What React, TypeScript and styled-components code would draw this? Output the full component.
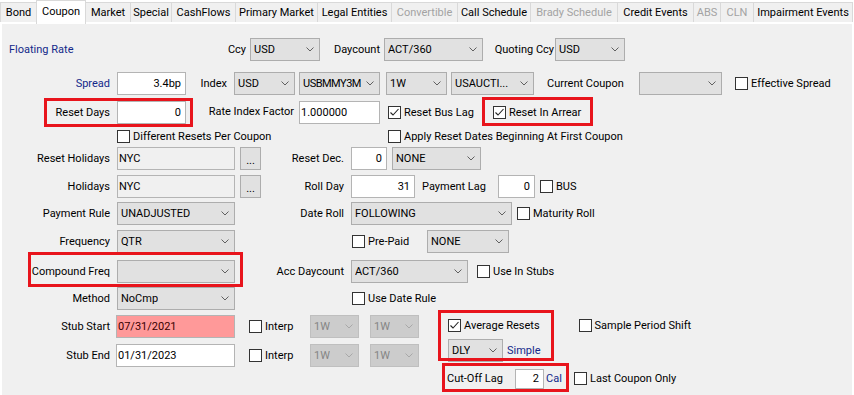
import React from "react";
import styled, { createGlobalStyle } from "styled-components";

const GlobalStyle = createGlobalStyle`
  html, body {
    margin: 0;
    padding: 0;
    background: #fff;
  }
  body {
    font-family: Roboto, "Noto Sans", sans-serif;
    font-size: 11px;
    color: #000;
  }
  #root {
    width: 854px;
    height: 395px;
    overflow: hidden;
  }
`;

const tabs = [
  { label: "Bond", w: 37 },
  { label: "Coupon", w: 50, active: true },
  { label: "Market", w: 46 },
  { label: "Special", w: 42 },
  { label: "CashFlows", w: 65 },
  { label: "Primary Market", w: 83 },
  { label: "Legal Entities", w: 75 },
  { label: "Convertible", w: 67, disabled: true },
  { label: "Call Schedule", w: 74 },
  { label: "Brady Schedule", w: 88, disabled: true },
  { label: "Credit Events", w: 77 },
  { label: "ABS", w: 28, disabled: true },
  { label: "CLN", w: 34, disabled: true },
  { label: "Impairment Events", w: 100 },
];

export default function App() {
  return (
    <>
      <GlobalStyle />
      <Window>
        <TabStrip>
          {tabs.map((t) => (
            <Tab key={t.label} $w={t.w} $active={t.active} $disabled={t.disabled}>
              {t.label}
            </Tab>
          ))}
        </TabStrip>
        <Panel>
          <Row $mt={14}>
            <Label $ml={9} $w={200} $blue>Floating Rate</Label>
            <Label $w={37} $right>Ccy</Label>
            <Combo $ml={4} $w={70} value="USD" />
            <Label $w={60} $right>Daycount</Label>
            <Combo $ml={4} $w={99} value="ACT/360" />
            <Label $w={71} $right>Quoting Ccy</Label>
            <Combo $ml={1} $w={70} value="USD" />
          </Row>

          <Row $mt={11}>
            <Label $w={110} $right $blue>Spread</Label>
            <TextBox $ml={7} $w={69} $right>3.4bp</TextBox>
            <Label $w={41} $right>Index</Label>
            <Combo $ml={7} $w={61} value="USD" />
            <Combo $ml={4} $w={81} value="USBMMY3M" tight />
            <Combo $ml={6} $w={61} value="1W" />
            <Combo $ml={4} $w={83} value="USAUCTI..." />
            <Label $ml={13} $w={92}>Current Coupon</Label>
            <Combo $w={83} value="" />
            <Check $ml={13} label="Effective Spread" />
          </Row>

          <Row $mt={6}>
            <Highlight $l={44} $t={-3} $r={-7} $b={-3}>
              <Label $w={110} $right>Reset Days</Label>
              <TextBox $ml={7} $w={69} $right>0</TextBox>
            </Highlight>
            <Label $w={108} $right $raise>Rate Index Factor</Label>
            <TextBox $ml={5} $w={81}>1.000000</TextBox>
            <Check $ml={8} $w={105} checked label="Reset Bus Lag" />
            <Highlight $l={-11} $t={-4} $r={-10} $b={-2}>
              <Check $w={90} checked label="Reset In Arrear" />
            </Highlight>
          </Row>

          <Row $mt={6} $h={13}>
            <Check $ml={117} $w={271} label="Different Resets Per Coupon" />
            <Check label="Apply Reset Dates Beginning At First Coupon" />
          </Row>

          <Row $mt={4}>
            <Label $w={110} $right>Reset Holidays</Label>
            <TextBox $ml={7} $w={118} $tone="readonly">NYC</TextBox>
            <DotsButton $ml={5}>...</DotsButton>
            <Label $w={83} $right>Reset Dec.</Label>
            <TextBox $ml={7} $w={36} $right>0</TextBox>
            <Combo $ml={5} $w={89} value="NONE" />
          </Row>

          <Row $mt={5}>
            <Label $w={110} $right>Holidays</Label>
            <TextBox $ml={7} $w={118} $tone="readonly">NYC</TextBox>
            <DotsButton $ml={5}>...</DotsButton>
            <Label $w={83} $right>Roll Day</Label>
            <TextBox $ml={7} $w={64} $right>31</TextBox>
            <Label $ml={7} $w={76}>Payment Lag</Label>
            <TextBox $w={37} $right>0</TextBox>
            <Check $ml={5} label="BUS" />
          </Row>

          <Row $mt={4}>
            <Label $w={110} $right>Payment Rule</Label>
            <Combo $ml={7} $w={118} value="UNADJUSTED" />
            <Label $w={109} $right>Date Roll</Label>
            <Combo $ml={7} $w={161} value="FOLLOWING" />
            <Check $ml={5} label="Maturity Roll" />
          </Row>

          <Row $mt={5}>
            <Label $w={110} $right>Frequency</Label>
            <Combo $ml={7} $w={118} value="QTR" />
            <Check $ml={117} $w={75} label="Pre-Paid" />
            <Combo $w={82} value="NONE" />
          </Row>

          <Row $mt={7}>
            <Highlight $l={28} $t={-8} $r={-8} $b={-4}>
              <Label $w={110} $right>Compound Freq</Label>
              <Combo $ml={7} $w={118} value="" />
            </Highlight>
            <Label $w={109} $right>Acc Daycount</Label>
            <Combo $ml={7} $w={117} value="ACT/360" />
            <Check $ml={9} label="Use In Stubs" />
          </Row>

          <Row $mt={4}>
            <Label $w={110} $right>Method</Label>
            <Combo $ml={7} $w={118} value="NoCmp" />
            <Check $ml={117} label="Use Date Rule" />
          </Row>

          <BottomArea>
            <StubColumn>
              <Row $mt={5}>
                <Label $w={110} $right>Stub Start</Label>
                <TextBox $ml={6} $w={119} $tone="error">07/31/2021</TextBox>
                <Check $ml={14} $w={61} label="Interp" />
                <Combo $w={49} value="1W" disabled />
                <Combo $ml={11} $w={49} value="1W" disabled />
              </Row>
              <Row $mt={6}>
                <Label $w={110} $right>Stub End</Label>
                <TextBox $ml={6} $w={119}>01/31/2023</TextBox>
                <Check $ml={14} $w={61} label="Interp" />
                <Combo $w={49} value="1W" disabled />
                <Combo $ml={11} $w={49} value="1W" disabled />
              </Row>
            </StubColumn>

            <AveragingColumn>
              <AveragingTop>
                <Highlight $ml={11} $column $l={-10} $t={-4} $r={-13} $b={1}>
                  <Row $mt={0}>
                    <Check checked label="Average Resets" />
                  </Row>
                  <Row $mt={2}>
                    <Combo $w={55} value="DLY" />
                    <Label $ml={4} $blue>Simple</Label>
                  </Row>
                </Highlight>
                <Row $mt={0}>
                  <Check $ml={38} label="Sample Period Shift" />
                </Row>
              </AveragingTop>
              <Row $mt={5}>
                <Highlight $ml={10} $l={-5} $t={-4} $r={-8} $b={-2}>
                  <Label $w={68}>Cut-Off Lag</Label>
                  <TextBox $w={29} $h={20} $right>2</TextBox>
                  <Label $ml={2} $w={15} $blue>Cal</Label>
                </Highlight>
                <Check $ml={13} label="Last Coupon Only" />
              </Row>
            </AveragingColumn>
          </BottomArea>
        </Panel>
      </Window>
    </>
  );
}

function Combo({
  value,
  $w,
  $ml,
  disabled,
  tight,
}: {
  value: string;
  $w: number;
  $ml?: number;
  disabled?: boolean;
  tight?: boolean;
}) {
  return (
    <ComboBox $w={$w} $ml={$ml} $disabled={disabled}>
      <ComboValue $tight={tight}>{value}</ComboValue>
      <svg width="8" height="5" viewBox="0 0 8 5">
        <polyline
          points="0.5,0.5 4,4 7.5,0.5"
          fill="none"
          stroke={disabled ? "#a8a8a8" : "#606060"}
          strokeWidth="1"
        />
      </svg>
    </ComboBox>
  );
}

function Check({ label, checked, $w, $ml }: { label: string; checked?: boolean; $w?: number; $ml?: number }) {
  return (
    <CheckWrapper $w={$w} $ml={$ml}>
      <CheckBox>
        {checked && (
          <svg width="11" height="11" viewBox="0 0 11 11">
            <polyline points="1.5,5.5 4,8 9.5,2" fill="none" stroke="#222" strokeWidth="1.1" />
          </svg>
        )}
      </CheckBox>
      <span>{label}</span>
    </CheckWrapper>
  );
}

const Window = styled.div`
  width: 854px;
  height: 395px;
  background: #fff;
  display: flex;
  flex-direction: column;
  overflow: hidden;
`;

const TabStrip = styled.div`
  display: flex;
  align-items: flex-start;
  height: 22px;
  flex: none;
`;

const Tab = styled.div<{ $w: number; $active?: boolean; $disabled?: boolean }>`
  box-sizing: border-box;
  flex: none;
  width: ${(p) => p.$w}px;
  height: ${(p) => (p.$active ? 24 : 20)}px;
  margin-top: ${(p) => (p.$active ? 0 : 2)}px;
  margin-left: -1px;
  padding-bottom: ${(p) => (p.$active ? 3 : 0)}px;
  display: flex;
  align-items: center;
  justify-content: center;
  border: 1px solid #d9d9d9;
  border-bottom: none;
  background: ${(p) => (p.$active ? "#fff" : "#f0f0f0")};
  color: ${(p) => (p.$disabled ? "#a3a3a3" : "#000")};
  white-space: nowrap;
  position: relative;
  z-index: ${(p) => (p.$active ? 1 : 0)};

  &:first-child {
    margin-left: 0;
  }
`;

const Panel = styled.div`
  flex: 1;
  margin-top: 2px;
  background: #f0f0f0;
  box-shadow: inset 2px 0 #fff, inset -2px 0 #fff;
  display: flex;
  flex-direction: column;
`;

const Row = styled.div<{ $mt: number; $h?: number }>`
  display: flex;
  align-items: center;
  flex: none;
  height: ${(p) => p.$h ?? 23}px;
  margin-top: ${(p) => p.$mt}px;
`;

const BottomArea = styled.div`
  display: flex;
  flex: none;
`;

const StubColumn = styled.div`
  display: flex;
  flex-direction: column;
  width: 437px;
  flex: none;
`;

const AveragingColumn = styled.div`
  display: flex;
  flex-direction: column;
`;

const AveragingTop = styled.div`
  display: flex;
  align-items: flex-start;
  margin-top: 4px;
`;

const Label = styled.span<{ $w?: number; $ml?: number; $right?: boolean; $blue?: boolean; $raise?: boolean }>`
  flex: none;
  width: ${(p) => (p.$w ? `${p.$w}px` : "auto")};
  margin-left: ${(p) => p.$ml ?? 0}px;
  margin-bottom: ${(p) => (p.$raise ? 3 : 0)}px;
  text-align: ${(p) => (p.$right ? "right" : "left")};
  color: ${(p) => (p.$blue ? "#13288a" : "#000")};
  white-space: nowrap;
`;

const ComboBox = styled.div<{ $w: number; $ml?: number; $disabled?: boolean }>`
  box-sizing: border-box;
  flex: none;
  width: ${(p) => p.$w}px;
  height: 23px;
  margin-left: ${(p) => p.$ml ?? 0}px;
  padding: 0 5px 0 3px;
  display: flex;
  align-items: center;
  justify-content: space-between;
  gap: 2px;
  background: ${(p) => (p.$disabled ? "#cccccc" : "#e1e1e1")};
  border: 1px solid ${(p) => (p.$disabled ? "#bfbfbf" : "#adadad")};
  color: ${(p) => (p.$disabled ? "#858585" : "#000")};
  white-space: nowrap;
  overflow: hidden;

  svg {
    flex: none;
  }
`;

const ComboValue = styled.span<{ $tight?: boolean }>`
  letter-spacing: ${(p) => (p.$tight ? "-0.5px" : "normal")};
  overflow: hidden;
`;

const toneColors = {
  normal: { bg: "#fff", fg: "#000" },
  readonly: { bg: "#f0f0f0", fg: "#000" },
  error: { bg: "#ff9999", fg: "#3a0000" },
};

const TextBox = styled.div<{ $w: number; $ml?: number; $h?: number; $right?: boolean; $tone?: keyof typeof toneColors }>`
  box-sizing: border-box;
  flex: none;
  width: ${(p) => p.$w}px;
  height: ${(p) => p.$h ?? 23}px;
  margin-left: ${(p) => p.$ml ?? 0}px;
  padding: 0 4px 0 1px;
  display: flex;
  align-items: center;
  justify-content: ${(p) => (p.$right ? "flex-end" : "flex-start")};
  background: ${(p) => toneColors[p.$tone ?? "normal"].bg};
  color: ${(p) => toneColors[p.$tone ?? "normal"].fg};
  border: 1px solid #b4b4b4;
  white-space: nowrap;
`;

const DotsButton = styled.div<{ $ml?: number }>`
  box-sizing: border-box;
  flex: none;
  width: 21px;
  height: 23px;
  margin-left: ${(p) => p.$ml ?? 0}px;
  padding-top: 3px;
  display: flex;
  align-items: center;
  justify-content: center;
  background: #e1e1e1;
  border: 1px solid #adadad;
`;

const CheckWrapper = styled.label<{ $w?: number; $ml?: number }>`
  flex: none;
  display: flex;
  align-items: center;
  gap: 3px;
  width: ${(p) => (p.$w ? `${p.$w}px` : "auto")};
  margin-left: ${(p) => p.$ml ?? 0}px;
  white-space: nowrap;
`;

const CheckBox = styled.span`
  box-sizing: border-box;
  flex: none;
  width: 13px;
  height: 13px;
  border: 1px solid #333;
  background: #fff;
  display: flex;
  align-items: center;
  justify-content: center;
`;

const Highlight = styled.div<{ $l: number; $t: number; $r: number; $b: number; $ml?: number; $column?: boolean }>`
  position: relative;
  flex: none;
  align-self: stretch;
  display: flex;
  flex-direction: ${(p) => (p.$column ? "column" : "row")};
  align-items: ${(p) => (p.$column ? "flex-start" : "center")};
  margin-left: ${(p) => p.$ml ?? 0}px;

  &::after {
    content: "";
    position: absolute;
    left: ${(p) => p.$l}px;
    top: ${(p) => p.$t}px;
    right: ${(p) => p.$r}px;
    bottom: ${(p) => p.$b}px;
    border: 3px solid #e8141c;
    pointer-events: none;
    z-index: 2;
  }
`;
